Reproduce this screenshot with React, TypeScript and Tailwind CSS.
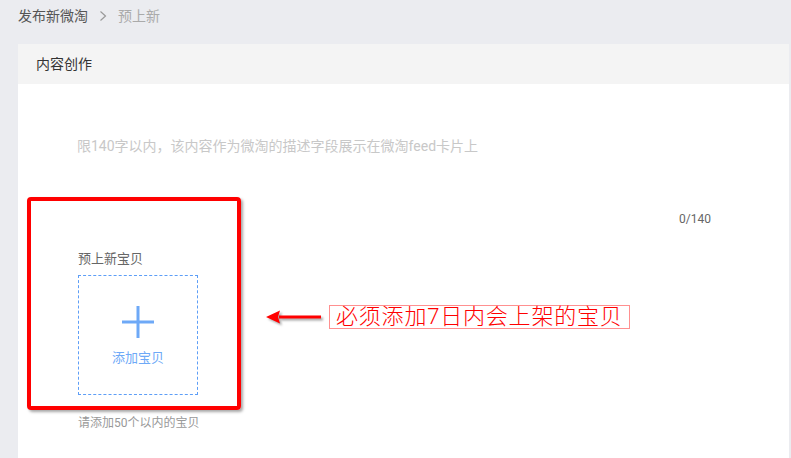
import React from "react";

const FONT = "font-['Roboto','Noto_Sans_CJK_SC',sans-serif]";

function Breadcrumb() {
  return (
    <div className="flex h-[32px] items-center gap-[10px] pl-[18px] text-[14px]">
      <span className="text-[#555]">发布新微淘</span>
      <svg width="10" height="12" viewBox="0 0 10 12" className="text-[#999]">
        <path d="M2.5 1.5 L7.5 6 L2.5 10.5" fill="none" stroke="currentColor" strokeWidth="1.2" />
      </svg>
      <span className="text-[#aaa]">预上新</span>
    </div>
  );
}

function PlusIcon() {
  return (
    <svg width="32" height="32" viewBox="0 0 32 32">
      <path d="M0 16 H32 M16 0 V32" stroke="#6ea9f7" strokeWidth="3" />
    </svg>
  );
}

function LeftArrow() {
  return (
    <svg width="60" height="20" viewBox="0 0 60 20" className="drop-shadow-[2px_2px_1px_rgba(0,0,0,0.35)]">
      <path d="M14 8.5 H56 V11.5 H14 Z" fill="#ff0000" />
      <path d="M1 10 L15 3.5 L13 10 L15 16.5 Z" fill="#ff0000" />
    </svg>
  );
}

function ItemPicker() {
  return (
    <div className="pl-[60px]">
      <p className="text-[13px] leading-[18px] text-[#666]">预上新宝贝</p>
      <button
        type="button"
        className="mt-[7px] flex h-[120px] w-[120px] flex-col items-center border border-dashed border-[#5d9ef7] bg-white"
      >
        <span className="mt-[30px]">
          <PlusIcon />
        </span>
        <span className="mt-[11px] text-[13px] leading-[18px] text-[#6ea9f7]">添加宝贝</span>
      </button>
      <p className="mt-[20px] text-[12px] leading-[16px] text-[#999]">请添加50个以内的宝贝</p>
    </div>
  );
}

export default function App() {
  return (
    <div className={`h-[458px] w-[791px] overflow-hidden bg-[#ebecf0] ${FONT}`}>
      <Breadcrumb />
      <div className="ml-[18px] mr-[2px] mt-[12px] bg-white">
        <div className="flex h-[40px] items-center bg-[#f4f4f4] pl-[18px] text-[14px] text-[#333]">
          内容创作
        </div>
        <div className="relative h-[374px]">
          <div className="flex flex-col">
            <p className="pl-[59px] pt-[52px] text-[14px] leading-[20px] text-[#c8c8c8]">
              限140字以内，该内容作为微淘的描述字段展示在微淘feed卡片上
            </p>
            <p className="mt-[55px] self-end pr-[78px] text-[12px] leading-[16px] text-[#666]">0/140</p>
          </div>
          <div className="mt-[23px]">
            <ItemPicker />
          </div>

          <div className="pointer-events-none absolute left-[9px] top-[113px] h-[213px] w-[214px] rounded-[4px] border-[4px] border-[#ff0000] shadow-[2px_2px_3px_rgba(0,0,0,0.35)]" />
          <div className="absolute left-[247px] top-[221px] flex items-center gap-[4px]">
            <LeftArrow />
            <span className="border border-[#ff9090] bg-white px-[6px] text-[22px] font-light leading-[22px] tracking-[0.8px] text-[#ff0000]">
              必须添加7日内会上架的宝贝
            </span>
          </div>
        </div>
      </div>
    </div>
  );
}
